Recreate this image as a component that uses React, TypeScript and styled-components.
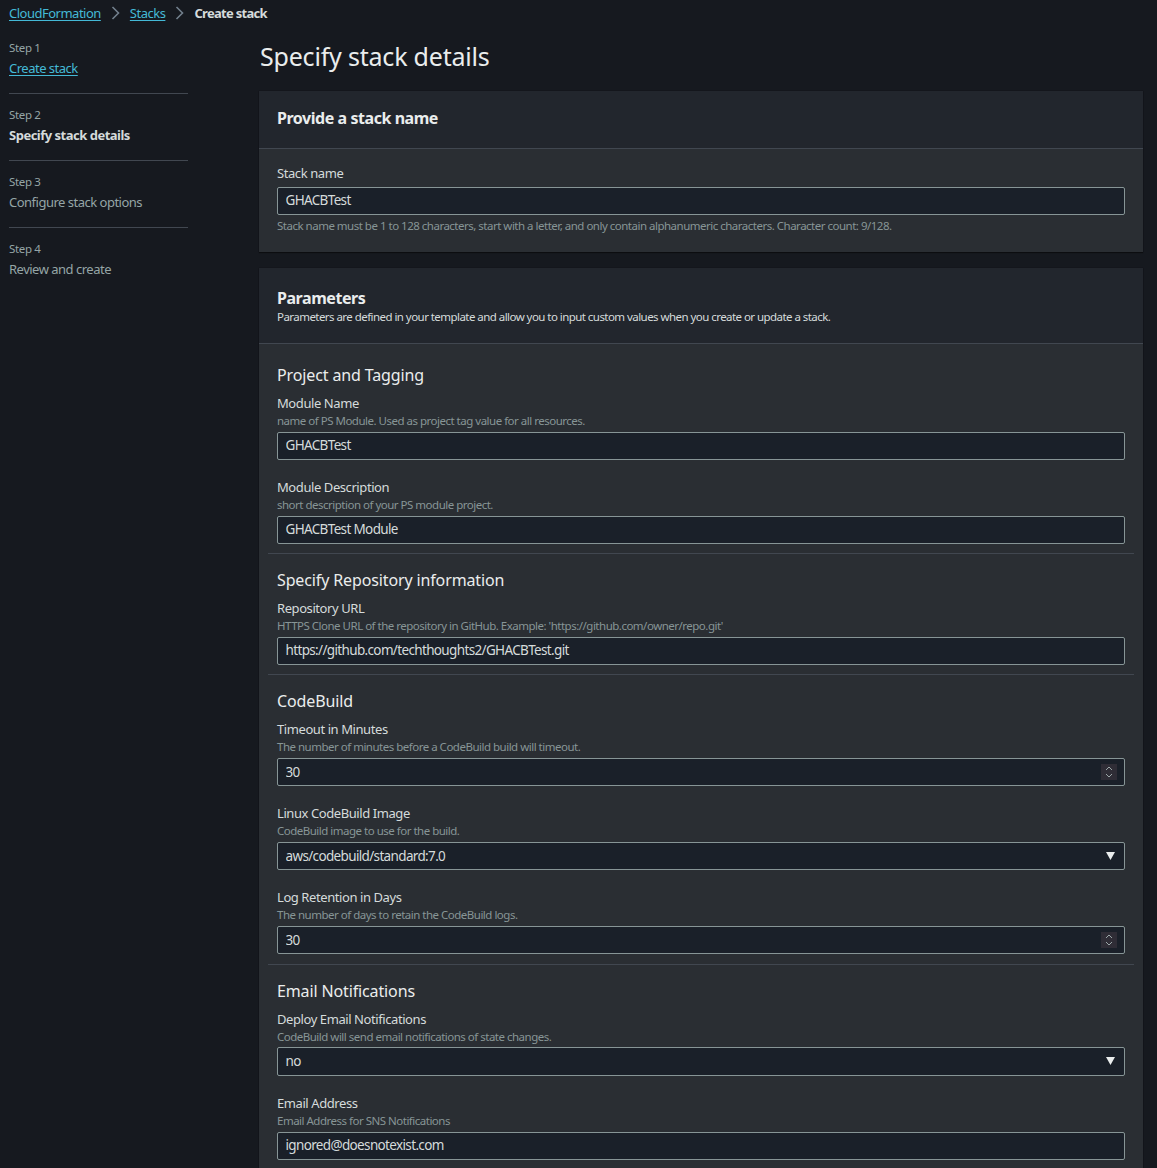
import React from 'react'
import styled, { createGlobalStyle } from 'styled-components'

const GlobalStyle = createGlobalStyle`
  html, body {
    margin: 0;
    padding: 0;
    height: 1168px;
    overflow: hidden;
    background: #16191f;
  }
  body {
    font-family: 'Noto Sans', 'Open Sans', sans-serif;
    font-size: 14px;
    color: #d5dbdb;
  }
`

const Page = styled.div`
  height: 1168px;
  overflow: hidden;
  padding: 0 14px 0 9px;
  box-sizing: border-box;
`

const Breadcrumbs = styled.nav`
  display: flex;
  align-items: center;
  height: 25px;
  margin-bottom: 1px;
  font-size: 13px;
  letter-spacing: -0.5px;
`

const Link = styled.a`
  color: #44b9d6;
  text-decoration: underline;
  text-underline-offset: 2px;
  text-decoration-thickness: 1px;
`

const Crumb = styled.span`
  display: flex;
  margin: 0 10px 0 10px;
`

const Current = styled.span`
  font-weight: 700;
  letter-spacing: -0.7px;
  color: #d5dbdb;
`

const Columns = styled.div`
  display: grid;
  grid-template-columns: 179px 1fr;
  column-gap: 71px;
`

const Steps = styled.ol`
  list-style: none;
  margin: 0;
  padding: 1px 0 0;
`

const Step = styled.li`
  height: 67px;
  padding-top: 13px;
  box-sizing: border-box;
  border-bottom: 1px solid #414750;

  &:last-child {
    border-bottom: none;
  }
`

const StepNumber = styled.div`
  font-size: 11.5px;
  line-height: 16px;
  letter-spacing: -0.35px;
  color: #95a5a6;
`

const StepName = styled.div<{ $active?: boolean }>`
  margin-top: 2px;
  font-size: 13px;
  line-height: 20px;
  letter-spacing: -0.5px;
  font-weight: ${p => (p.$active ? 700 : 400)};
  color: ${p => (p.$active ? '#d5dbdb' : '#95a5a6')};
`

const Main = styled.main`
  min-width: 0;
`

const Title = styled.h1`
  margin: 13px 0 18px 1px;
  font-size: 25px;
  line-height: 34px;
  letter-spacing: -0.2px;
  font-weight: 400;
  color: #eaeded;
`

const Panel = styled.section`
  margin-bottom: 16px;
  background: #2a2e33;
  box-shadow: 0 1px 1px rgba(0, 0, 0, 0.4), 0 0 1px rgba(0, 0, 0, 0.5);
`

const PanelHead = styled.header<{ $tall?: boolean }>`
  display: flex;
  flex-direction: column;
  justify-content: center;
  box-sizing: border-box;
  height: ${p => (p.$tall ? '76px' : '58px')};
  padding: ${p => (p.$tall ? '0 18px' : '0 18px 3px')};
  background: #22262d;
  border-bottom: 1px solid #414750;
`

const PanelTitle = styled.h2`
  margin: 0;
  font-size: 16px;
  line-height: 22px;
  letter-spacing: -0.45px;
  font-weight: 700;
  color: #eaeded;
`

const PanelNote = styled.p`
  margin: 0;
  font-size: 11.5px;
  line-height: 16px;
  letter-spacing: -0.55px;
  color: #d5dbdb;
`

const PanelBody = styled.div<{ $groups?: boolean }>`
  padding: ${p => (p.$groups ? '5px' : '15px')} 18px 18.25px;
`

const Group = styled.div`
  margin: 0 -9px;
  padding: 0 9px 9.5px;
  border-bottom: 1px solid #414750;

  &:last-child {
    border-bottom: none;
  }
`

const GroupTitle = styled.h3`
  margin: 0;
  padding-top: 15px;
  height: 45px;
  box-sizing: border-box;
  font-size: 16px;
  line-height: 22px;
  letter-spacing: -0.13px;
  font-weight: 400;
  color: #eaeded;
`

const Field = styled.div`
  & + & {
    margin-top: 18px;
  }
`

const Label = styled.label`
  display: block;
  font-size: 13px;
  line-height: 18px;
  letter-spacing: -0.42px;
  color: #d5dbdb;
`

const Hint = styled.div`
  font-size: 11.5px;
  line-height: 17px;
  letter-spacing: -0.5px;
  color: #879596;
`

const Constraint = styled(Hint)`
  margin-top: 3px;
  line-height: 16px;
`

const Control = styled.div<{ $select?: boolean; $bare?: boolean }>`
  position: relative;
  margin-top: ${p => (p.$bare ? '4.75px' : '2.75px')};
  height: ${p => (p.$select ? '28.7px' : '28px')};
`

const Input = styled.input`
  display: block;
  width: 100%;
  height: 100%;
  box-sizing: border-box;
  padding: 0 7.5px 1px;
  margin: 0;
  border: 1px solid #879596;
  border-radius: 2px;
  background: #1a2029;
  color: #d5dbdb;
  font: inherit;
  font-size: 13.5px;
  letter-spacing: -0.65px;
  outline: none;
`

const Spinner = styled.span`
  position: absolute;
  top: 6px;
  right: 8px;
  width: 16px;
  height: 16px;
  display: flex;
  background: #2f2d36;
`

const Arrow = styled.span`
  position: absolute;
  top: 10px;
  right: 10px;
  display: flex;
`

type FieldRowProps = {
  label: string
  hint?: string
  value: string
  kind?: 'text' | 'number' | 'select'
}

function FieldRow({ label, hint, value, kind = 'text' }: FieldRowProps) {
  return (
    <Field>
      <Label>{label}</Label>
      {hint && <Hint>{hint}</Hint>}
      <Control $select={kind === 'select'} $bare={!hint}>
        <Input readOnly value={value} aria-label={label} />
        {kind === 'number' && (
          <Spinner>
            <svg width="16" height="16" viewBox="0 0 16 16" fill="none" stroke="#9ba7a8" strokeWidth="1">
              <path d="M5 6 8 3l3 3M5 10l3 3 3-3" />
            </svg>
          </Spinner>
        )}
        {kind === 'select' && (
          <Arrow>
            <svg width="9" height="8" viewBox="0 0 9 8" fill="#eaeded">
              <path d="M0 0h9L4.5 8z" />
            </svg>
          </Arrow>
        )}
      </Control>
    </Field>
  )
}

const Chevron = () => (
  <Crumb>
    <svg width="9" height="14" viewBox="0 0 9 14" fill="none" stroke="#727f8c" strokeWidth="1.6">
      <path d="M1.5 1l6 6-6 6" />
    </svg>
  </Crumb>
)

const steps = ['Create stack', 'Specify stack details', 'Configure stack options', 'Review and create']

export default function App() {
  return (
    <Page>
      <GlobalStyle />
      <Breadcrumbs>
        <Link>CloudFormation</Link>
        <Chevron />
        <Link>Stacks</Link>
        <Chevron />
        <Current>Create stack</Current>
      </Breadcrumbs>
      <Columns>
        <Steps>
          {steps.map((name, i) => (
            <Step key={name}>
              <StepNumber>Step {i + 1}</StepNumber>
              <StepName $active={i === 1}>{i === 0 ? <Link>{name}</Link> : name}</StepName>
            </Step>
          ))}
        </Steps>
        <Main>
          <Title>Specify stack details</Title>
          <Panel>
            <PanelHead>
              <PanelTitle>Provide a stack name</PanelTitle>
            </PanelHead>
            <PanelBody>
              <FieldRow label="Stack name" value="GHACBTest" />
              <Constraint>
                Stack name must be 1 to 128 characters, start with a letter, and only contain alphanumeric characters.
                Character count: 9/128.
              </Constraint>
            </PanelBody>
          </Panel>
          <Panel>
            <PanelHead $tall>
              <PanelTitle>Parameters</PanelTitle>
              <PanelNote>
                Parameters are defined in your template and allow you to input custom values when you create or update a
                stack.
              </PanelNote>
            </PanelHead>
            <PanelBody $groups>
              <Group>
                <GroupTitle>Project and Tagging</GroupTitle>
                <FieldRow
                  label="Module Name"
                  hint="name of PS Module. Used as project tag value for all resources."
                  value="GHACBTest"
                />
                <FieldRow
                  label="Module Description"
                  hint="short description of your PS module project."
                  value="GHACBTest Module"
                />
              </Group>
              <Group>
                <GroupTitle>Specify Repository information</GroupTitle>
                <FieldRow
                  label="Repository URL"
                  hint="HTTPS Clone URL of the repository in GitHub. Example: 'https://github.com/owner/repo.git'"
                  value="https://github.com/techthoughts2/GHACBTest.git"
                />
              </Group>
              <Group>
                <GroupTitle>CodeBuild</GroupTitle>
                <FieldRow
                  label="Timeout in Minutes"
                  hint="The number of minutes before a CodeBuild build will timeout."
                  value="30"
                  kind="number"
                />
                <FieldRow
                  label="Linux CodeBuild Image"
                  hint="CodeBuild image to use for the build."
                  value="aws/codebuild/standard:7.0"
                  kind="select"
                />
                <FieldRow
                  label="Log Retention in Days"
                  hint="The number of days to retain the CodeBuild logs."
                  value="30"
                  kind="number"
                />
              </Group>
              <Group>
                <GroupTitle>Email Notifications</GroupTitle>
                <FieldRow
                  label="Deploy Email Notifications"
                  hint="CodeBuild will send email notifications of state changes."
                  value="no"
                  kind="select"
                />
                <FieldRow
                  label="Email Address"
                  hint="Email Address for SNS Notifications"
                  value="ignored@doesnotexist.com"
                />
              </Group>
            </PanelBody>
          </Panel>
        </Main>
      </Columns>
    </Page>
  )
}
